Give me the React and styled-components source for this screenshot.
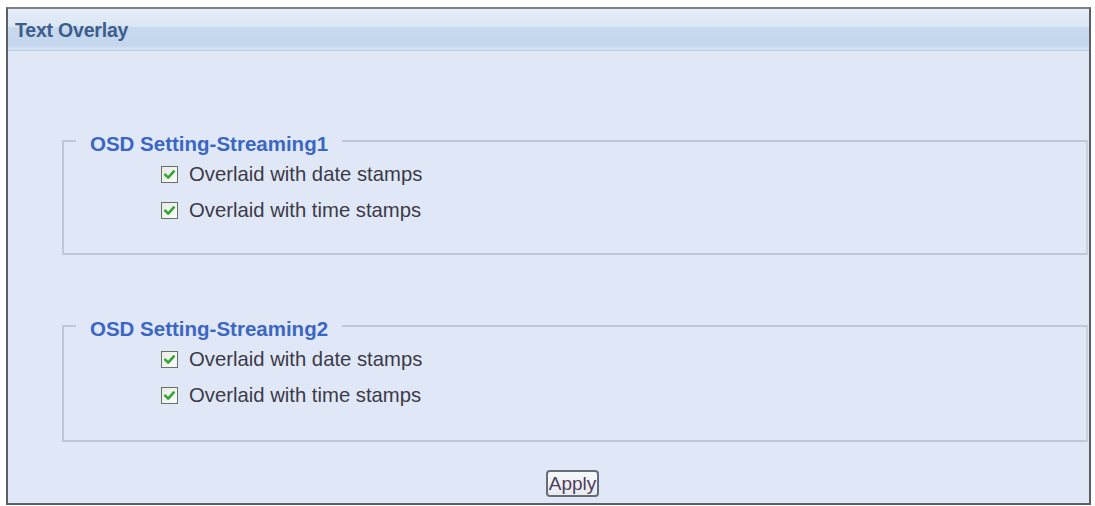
import styled, { createGlobalStyle } from "styled-components";

const GlobalStyle = createGlobalStyle`
  html, body {
    margin: 0;
    padding: 0;
    background: #ffffff;
  }
  body {
    font-family: "Liberation Sans", Arial, sans-serif;
  }
`;

const Page = styled.div`
  padding: 7px 4px 0 6px;
`;

const Frame = styled.div`
  display: flex;
  flex-direction: column;
  width: 1081px;
  height: 494px;
  background: #e0e8f7;
  border: 2px solid #5c5f63;
  border-top-color: #7d8085;
`;

const Header = styled.div`
  height: 41px;
  display: flex;
  align-items: center;
  padding-left: 7px;
  border-bottom: 1px solid #b9cbe2;
  background: linear-gradient(
    to bottom,
    #e4edf8 0px,
    #dce7f5 17px,
    #c8d9ee 19px,
    #c4d6ed 37px,
    #d3e1f2 39px,
    #d6e3f3 41px
  );
`;

const Title = styled.span`
  font-family: "Liberation Sans", Arial, sans-serif;
  font-weight: 700;
  font-size: 19.5px;
  letter-spacing: -0.2px;
  color: #3d5d8c;
  margin-top: 2px;
`;

const Body = styled.div`
  flex: 1;
  display: flex;
  flex-direction: column;
  padding: 0 1px 0 54px;
`;

const Group = styled.div`
  margin-top: ${(p) => p.$top}px;
  border: 2px solid #bec8d6;
  border-right-color: #c9d2de;
  padding: 0 0 ${(p) => p.$bottom}px 97px;
`;

const Legend = styled.div`
  width: max-content;
  margin: -10px 0 0 -85px;
  padding: 0 14px;
  background: #e0e8f7;
  font-weight: 700;
  font-size: 20.5px;
  line-height: 24px;
  color: #3b66c4;
`;

const Row = styled.label`
  display: flex;
  align-items: center;
  height: 36.5px;
  gap: 11px;
  font-size: 20.3px;
  color: #3c3a48;
`;

const Box = styled.span`
  display: inline-flex;
  width: 17px;
  height: 17px;
  box-sizing: border-box;
  border: 1px solid #667268;
  background: linear-gradient(to bottom right, #e6ebe3, #fbfcfa);
  align-items: center;
  justify-content: center;
`;

const Footer = styled.div`
  display: flex;
  justify-content: center;
  margin-top: 28px;
`;

const ApplyButton = styled.button`
  width: 53px;
  height: 27px;
  padding: 0;
  border: 2px solid #666d7b;
  border-radius: 4px;
  background: linear-gradient(to bottom, #f7f8fa, #e8ebf0);
  font-family: "Liberation Sans", Arial, sans-serif;
  font-size: 19px;
  color: #4b3d5c;
  margin-right: 5px;
`;

const Check = () => (
  <Box>
    <svg width="13" height="13" viewBox="0 0 13 13">
      <path
        d="M2.2 6.6 L5.2 9.6 L10.8 3.4"
        fill="none"
        stroke="#36a336"
        strokeWidth="2.6"
        strokeLinecap="round"
        strokeLinejoin="round"
      />
    </svg>
  </Box>
);

const groups = [
  { name: "OSD Setting-Streaming1", top: 89, bottom: 24 },
  { name: "OSD Setting-Streaming2", top: 70, bottom: 26 },
];

export default function App() {
  return (
    <>
      <GlobalStyle />
      <Page>
        <Frame>
          <Header>
            <Title>Text Overlay</Title>
          </Header>
          <Body>
            {groups.map((g) => (
              <Group key={g.name} $top={g.top} $bottom={g.bottom}>
                <Legend>{g.name}</Legend>
                <Row>
                  <Check />
                  Overlaid with date stamps
                </Row>
                <Row>
                  <Check />
                  Overlaid with time stamps
                </Row>
              </Group>
            ))}
            <Footer>
              <ApplyButton>Apply</ApplyButton>
            </Footer>
          </Body>
        </Frame>
      </Page>
    </>
  );
}
